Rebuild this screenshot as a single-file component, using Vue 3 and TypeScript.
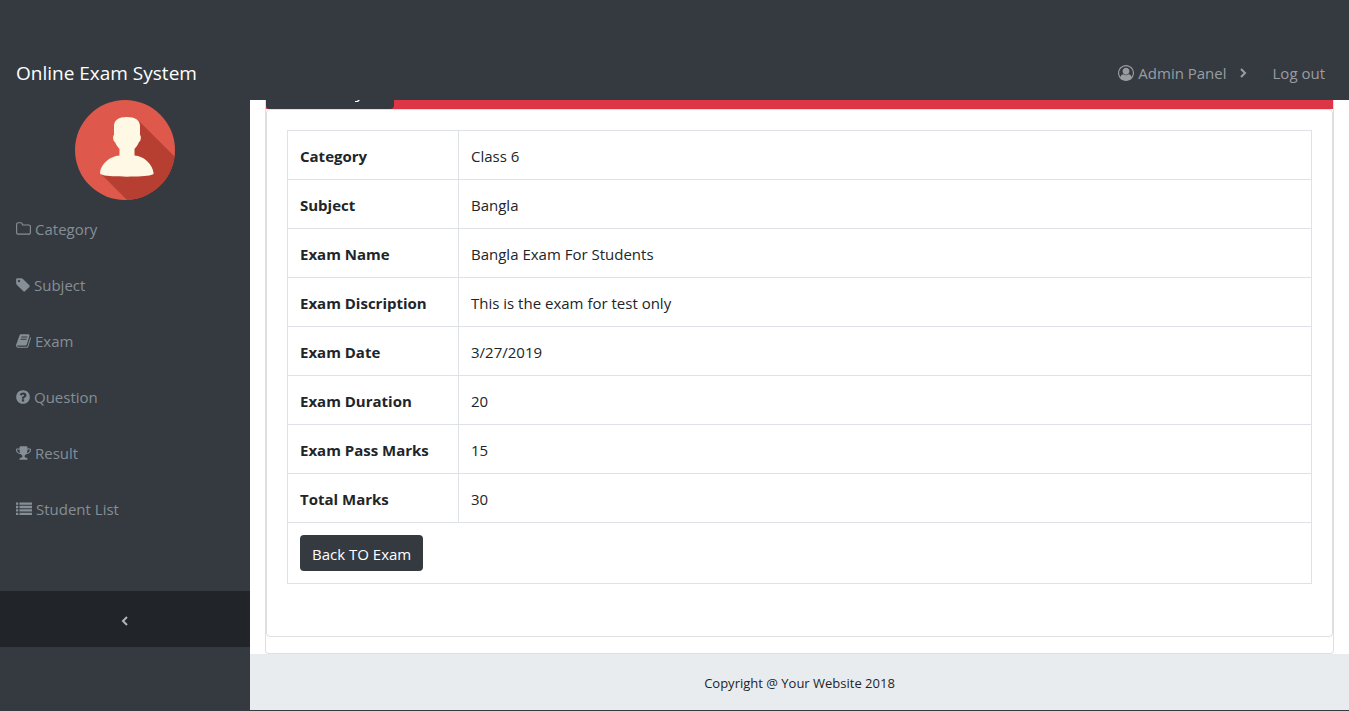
<script setup lang="ts">
interface NavItem {
  label: string
  box: string
  width: number
  path: string
}

const navItems: NavItem[] = [
  {
    label: 'Category',
    box: '64 0 1664 1792',
    width: 15,
    path: 'M1600 1312v-704q0-40-28-68t-68-28h-704q-40 0-68-28t-28-68v-64q0-40-28-68t-68-28h-320q-40 0-68 28t-28 68v960q0 40 28 68t68 28h1216q40 0 68-28t28-68zm128-704v704q0 92-66 158t-158 66h-1216q-92 0-158-66t-66-158v-960q0-92 66-158t158-66h320q92 0 158 66t66 158v32h672q92 0 158 66t66 158z',
  },
  {
    label: 'Subject',
    box: '128 0 1536 1792',
    width: 14,
    path: 'M576 448q0-53-37.5-90.5t-90.5-37.5-90.5 37.5-37.5 90.5 37.5 90.5 90.5 37.5 90.5-37.5 37.5-90.5zm1067 576q0 53-37 90l-491 492q-39 37-91 37-53 0-90-37l-715-716q-38-37-64.5-101t-26.5-117v-416q0-52 38-90t90-38h416q53 0 117 26.5t102 64.5l715 714q37 39 37 91z',
  },
  {
    label: 'Exam',
    box: '64 0 1664 1792',
    width: 15,
    path: 'M1703 478q40 57 18 129l-275 906q-19 64-76.5 107.5t-122.5 43.5h-923q-77 0-148.5-53.5t-99.5-131.5q-24-67-2-127 0-4 3-27t4-37q1-8-3-21.5t-3-19.5q2-11 8-21t16.5-23.5 16.5-23.5q23-38 45-91.5t30-91.5q3-10 .5-30t-.5-28q3-11 17-28t17-23q21-36 42-92t25-90q1-9-2.5-32t.5-28q4-13 22-30.5t22-22.5q19-26 42.5-84.5t27.5-96.5q1-8-3-25.5t-2-26.5q2-8 9-18t18-23 17-21q8-12 16.5-30.5t15-35 16-36 19.5-32 26.5-23.5 36-11.5 47.5 5.5l-1 3q38-9 51-9h761q74 0 114 56t18 130l-274 906q-36 119-71.5 153.5t-128.5 34.5h-869q-27 0-38 15-11 16-1 43 24 70 144 70h923q29 0 56-15.5t35-41.5l300-987q7-22 5-57 38 15 59 43zm-1064 2q-4 13 2 22.5t20 9.5h608q13 0 25.5-9.5t16.5-22.5l21-64q4-13-2-22.5t-20-9.5h-608q-13 0-25.5 9.5t-16.5 22.5zm-83 256q-4 13 2 22.5t20 9.5h608q13 0 25.5-9.5t16.5-22.5l21-64q4-13-2-22.5t-20-9.5h-608q-13 0-25.5 9.5t-16.5 22.5z',
  },
  {
    label: 'Question',
    box: '128 0 1536 1792',
    width: 14,
    path: 'M1024 1376v-192q0-14-9-23t-23-9h-192q-14 0-23 9t-9 23v192q0 14 9 23t23 9h192q14 0 23-9t9-23zm256-672q0-88-55.5-163t-138.5-116-170-41q-243 0-371 213-15 24 8 42l132 100q7 6 19 6 16 0 25-12 53-68 86-92 34-24 86-24 48 0 85.5 26t37.5 59q0 38-20 61t-68 45q-63 28-115.5 86.5t-52.5 125.5v36q0 14 9 23t23 9h192q14 0 23-9t9-23q0-19 21.5-49.5t54.5-49.5q32-18 49-28.5t46-35 44.5-48 28-60.5 12.5-81zm384 192q0 209-103 385.5t-279.5 279.5-385.5 103-385.5-103-279.5-279.5-103-385.5 103-385.5 279.5-279.5 385.5-103 385.5 103 279.5 279.5 103 385.5z',
  },
  {
    label: 'Result',
    box: '64 0 1664 1792',
    width: 15,
    path: 'M522 883q-74-162-74-371h-256v96q0 78 94.5 162t235.5 113zm1078-275v-96h-256q0 209-74 371 141-29 235.5-113t94.5-162zm128-128v128q0 71-41.5 143t-112 130-173 97.5-215.5 44.5q-42 54-95 95-38 34-52.5 72.5t-14.5 89.5q0 54 30.5 91t97.5 37q75 0 133.5 45.5t58.5 114.5v64q0 14-9 23t-23 9h-832q-14 0-23-9t-9-23v-64q0-69 58.5-114.5t133.5-45.5q67 0 97.5-37t30.5-91q0-51-14.5-89.5t-52.5-72.5q-53-41-95-95-113-5-215.5-44.5t-173-97.5-112-130-41.5-143v-128q0-40 28-68t68-28h288v-96q0-66 47-113t113-47h576q66 0 113 47t47 113v96h288q40 0 68 28t28 68z',
  },
  {
    label: 'Student List',
    box: '0 0 1792 1792',
    width: 16,
    path: 'M0 160h256v256H0zM0 544h256v256H0zM0 928h256v256H0zM0 1312h256v256H0zM384 160h1408v256H384zM384 544h1408v256H384zM384 928h1408v256H384zM384 1312h1408v256H384z',
  },
]

const rows: { label: string; value: string }[] = [
  { label: 'Category', value: 'Class 6' },
  { label: 'Subject', value: 'Bangla' },
  { label: 'Exam Name', value: 'Bangla Exam For Students' },
  { label: 'Exam Discription', value: 'This is the exam for test only' },
  { label: 'Exam Date', value: '3/27/2019' },
  { label: 'Exam Duration', value: '20' },
  { label: 'Exam Pass Marks', value: '15' },
  { label: 'Total Marks', value: '30' },
]
</script>

<template>
  <div class="app">
    <header class="topbar">
      <a class="brand" href="#">Online Exam System</a>
      <nav class="account" aria-label="Account">
        <a href="#">
          <svg width="16" height="16" viewBox="0 0 1792 1792" aria-hidden="true">
            <path d="M896 0q182 0 348 71t286 191 191 286 71 348q0 181-70.5 347t-190.5 286-286 191.5-349 71.5-349-71-285.5-191.5-190.5-286-71-347.5 71-348 191-286 286-191 348-71zm619 1351q149-205 149-455 0-156-61-298t-164-245-245-164-298-61-298 61-245 164-164 245-61 298q0 250 149 455 66-327 306-327 131 128 313 128t313-128q240 0 306 327zm-235-647q0-159-112.5-271.5t-271.5-112.5-271.5 112.5-112.5 271.5 112.5 271.5 271.5 112.5 271.5-112.5 112.5-271.5z" />
          </svg>
          <span>Admin Panel</span>
          <svg class="caret" width="8" height="10" viewBox="0 0 8 10" aria-hidden="true">
            <path class="stroke" d="M2 1l4 4-4 4" />
          </svg>
        </a>
        <a href="#">Log out</a>
      </nav>
    </header>

    <div class="body">
      <aside class="sidebar">
        <svg class="avatar" width="100" height="100" viewBox="0 0 100 100" role="img" aria-label="User">
          <defs>
            <clipPath id="disc"><circle cx="50" cy="50" r="50" /></clipPath>
          </defs>
          <g clip-path="url(#disc)">
            <rect width="100" height="100" fill="#df584c" />
            <path d="M63 20L103 60V103H55L26 74L50 50Z" fill="#b73f31" />
          </g>
          <path d="M51.500 17C44 17 39 20 39 26V35C37.500 36 38 41 40 42C41 45 43 47 44.500 49V55.500C35 56 26 64 25 72.500C25 74 26 74.500 28 75C36 77.200 68 77.200 76 75C78 74.500 79 74 78.500 72.500C77 64 69 56 59.500 55.500V49C61 47 63 45 64 42C66 41 66.500 36 65 35V26C65 20 60 17 51.500 17Z" fill="#fff8e5" />
        </svg>
        <nav class="menu" aria-label="Main">
          <a v-for="item in navItems" :key="item.label" href="#">
            <svg :width="item.width" height="16" :viewBox="item.box" aria-hidden="true">
              <path :d="item.path" />
            </svg>
            <span>{{ item.label }}</span>
          </a>
        </nav>
        <button class="collapse" type="button" aria-label="Collapse sidebar">
          <svg width="8" height="10" viewBox="0 0 8 10" aria-hidden="true">
            <path class="stroke" d="M6 1L2 5l4 4" />
          </svg>
        </button>
      </aside>

      <div class="content">
        <main>
          <div class="card">
            <div class="card-head">
              <span class="tab">
                <svg width="5" height="2" viewBox="0 0 5 2" aria-hidden="true">
                  <path d="M0 1H2L3 0H5L3 2H0Z" />
                </svg>
              </span>
            </div>
            <div class="panel">
              <table>
                <colgroup><col class="label-col" /><col /></colgroup>
                <tbody>
                  <tr v-for="row in rows" :key="row.label">
                    <th scope="row">{{ row.label }}</th>
                    <td>{{ row.value }}</td>
                  </tr>
                  <tr>
                    <td colspan="2"><button class="back" type="button">Back TO Exam</button></td>
                  </tr>
                </tbody>
              </table>
            </div>
          </div>
        </main>
        <footer>Copyright @ Your Website 2018</footer>
      </div>
    </div>
  </div>
</template>

<style>
body {
  margin: 0;
  background: #343a40;
}
</style>

<style scoped>
.app {
  box-sizing: border-box;
  min-height: 100vh;
  display: flex;
  flex-direction: column;
  padding-bottom: 1px;
  background: #343a40;
  color: #212529;
  font-family: "Segoe UI", "Open Sans", sans-serif;
  font-size: 15px;
  line-height: 24px;
}
.app * {
  box-sizing: border-box;
}
a {
  color: inherit;
  text-decoration: none;
}
button {
  border: 0;
  font: inherit;
  cursor: pointer;
}
svg {
  flex: none;
  fill: currentColor;
}
.stroke {
  fill: none;
  stroke: currentColor;
  stroke-width: 2;
}
.topbar {
  height: 100px;
  display: flex;
  justify-content: space-between;
  align-items: flex-end;
  padding: 0 24px 15px 16px;
}
.brand {
  color: #fff;
  font-size: 19px;
}
.account {
  display: flex;
  gap: 26px;
  color: #9a9da0;
}
.account a,
.menu a {
  display: flex;
  align-items: center;
  gap: 4px;
}
.caret {
  margin-left: 8px;
}
.body {
  flex: 1;
  display: flex;
}
.sidebar {
  flex: none;
  width: 250px;
  display: flex;
  flex-direction: column;
  padding-bottom: 63px;
}
.avatar {
  align-self: center;
}
.menu {
  padding-top: 1px;
  color: #868e96;
}
.menu a {
  padding: 16px;
}
.collapse {
  height: 56px;
  margin-top: auto;
  display: flex;
  align-items: center;
  justify-content: center;
  padding-top: 4px;
  background: #212529;
  color: #adb5bd;
}
.content {
  flex: 1;
  min-width: 0;
  display: flex;
  flex-direction: column;
  background: #fff;
}
main {
  flex: 1;
  display: flex;
  padding: 0 15px;
}
.card {
  flex: 1;
  display: flex;
  flex-direction: column;
  padding-bottom: 16px;
  border: 1px solid #dfdfdf;
  border-top: 0;
  border-radius: 0 0 4px 4px;
}
.card-head {
  display: flex;
  background: #dc3545;
}
.tab {
  width: 128px;
  height: 9px;
  display: flex;
  justify-content: flex-end;
  padding-right: 34px;
  border-radius: 0 0 4px 4px;
  background: #343a40;
  color: #fff;
}
.panel {
  flex: 1;
  padding: 20px 20px 52px;
  border: 1px solid #dfdfdf;
  border-radius: 4px;
}
table {
  width: 100%;
  border-collapse: collapse;
  table-layout: fixed;
}
.label-col {
  width: 171px;
}
th,
td {
  padding: 13px 12px 11px;
  border: 1px solid #dee2e6;
  text-align: left;
}
th {
  font-weight: 700;
}
td[colspan] {
  padding: 12px;
}
.back {
  display: block;
  padding: 7px 12px 5px;
  border-radius: 4px;
  background: #343a40;
  color: #fff;
}
footer {
  padding: 17px 15px 15px;
  background: #e9ecef;
  text-align: center;
  font-size: 13px;
}
</style>
